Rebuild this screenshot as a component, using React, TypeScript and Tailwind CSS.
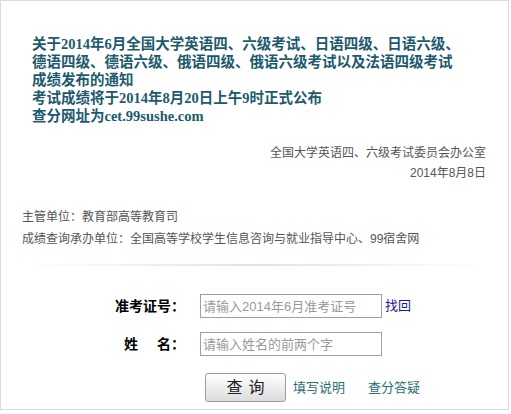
export default function App() {
  const body = { fontFamily: '"Liberation Sans", "Noto Sans CJK SC", sans-serif' };
  const serif = { fontFamily: '"Liberation Serif", "Noto Sans CJK SC", serif' };

  return (
    <div className="w-[509px] h-[410px] border border-[#dcdcdc] bg-white" style={body}>
      {/* 通知标题 */}
      <div className="pt-[34px] pl-[31px] text-[14.5px] leading-[18px] font-bold text-[#1d5a6e] whitespace-nowrap" style={serif}>
        <p>关于2014年6月全国大学英语四、六级考试、日语四级、日语六级、</p>
        <p>德语四级、德语六级、俄语四级、俄语六级考试以及法语四级考试</p>
        <p>成绩发布的通知</p>
        <p>考试成绩将于2014年8月20日上午9时正式公布</p>
        <p>查分网址为cet.99sushe.com</p>
      </div>

      {/* 落款 */}
      <div className="mt-[18px] pr-[22px] text-right text-[12px] leading-[20px] text-[#555]">
        <p>全国大学英语四、六级考试委员会办公室</p>
        <p>2014年8月8日</p>
      </div>

      <div className="mt-[23px] pl-[21px] text-[12px] leading-[22px] text-[#555]">
        <p>主管单位：教育部高等教育司</p>
        <p>成绩查询承办单位：全国高等学校学生信息咨询与就业指导中心、99宿舍网</p>
      </div>

      <div className="mt-[14px] mx-[24px] h-[2px] bg-gradient-to-r from-transparent via-[#e2e2e2] to-transparent" />

      {/* 查询表单 */}
      <div className="mt-[28px] flex flex-col">
        <div className="flex items-center">
          <div className="w-[184px] text-right text-[14px] font-bold text-black">准考证号：</div>
          <input
            className="ml-[15px] w-[182px] h-[24px] border border-[#a0a0a0] px-[2px] text-[13px] placeholder:text-[#9a9a9a] outline-none"
            placeholder="请输入2014年6月准考证号"
          />
          <a className="ml-[3px] text-[13px] text-[#1a1a8c]">找回</a>
        </div>
        <div className="mt-[14px] flex items-center">
          <div className="w-[184px] flex justify-end text-[14px] font-bold text-black">
            <span>姓</span>
            <span className="w-[19px]" />
            <span>名：</span>
          </div>
          <input
            className="ml-[15px] w-[182px] h-[24px] border border-[#a0a0a0] px-[2px] text-[13px] placeholder:text-[#9a9a9a] outline-none"
            placeholder="请输入姓名的前两个字"
          />
        </div>
        <div className="mt-[17px] pl-[204px] flex items-center">
          <button className="w-[81px] h-[29px] rounded-[3px] border border-[#9c9c9c] bg-gradient-to-b from-white to-[#dcdcdc] text-[16px] tracking-[6px] pl-[6px] text-[#222] shadow-[inset_0_1px_0_#fff]">
            查询
          </button>
          <a className="ml-[7px] text-[13px] text-[#2b6e70]">填写说明</a>
          <a className="ml-[23px] text-[13px] text-[#2b6e70]">查分答疑</a>
        </div>
      </div>
    </div>
  );
}
